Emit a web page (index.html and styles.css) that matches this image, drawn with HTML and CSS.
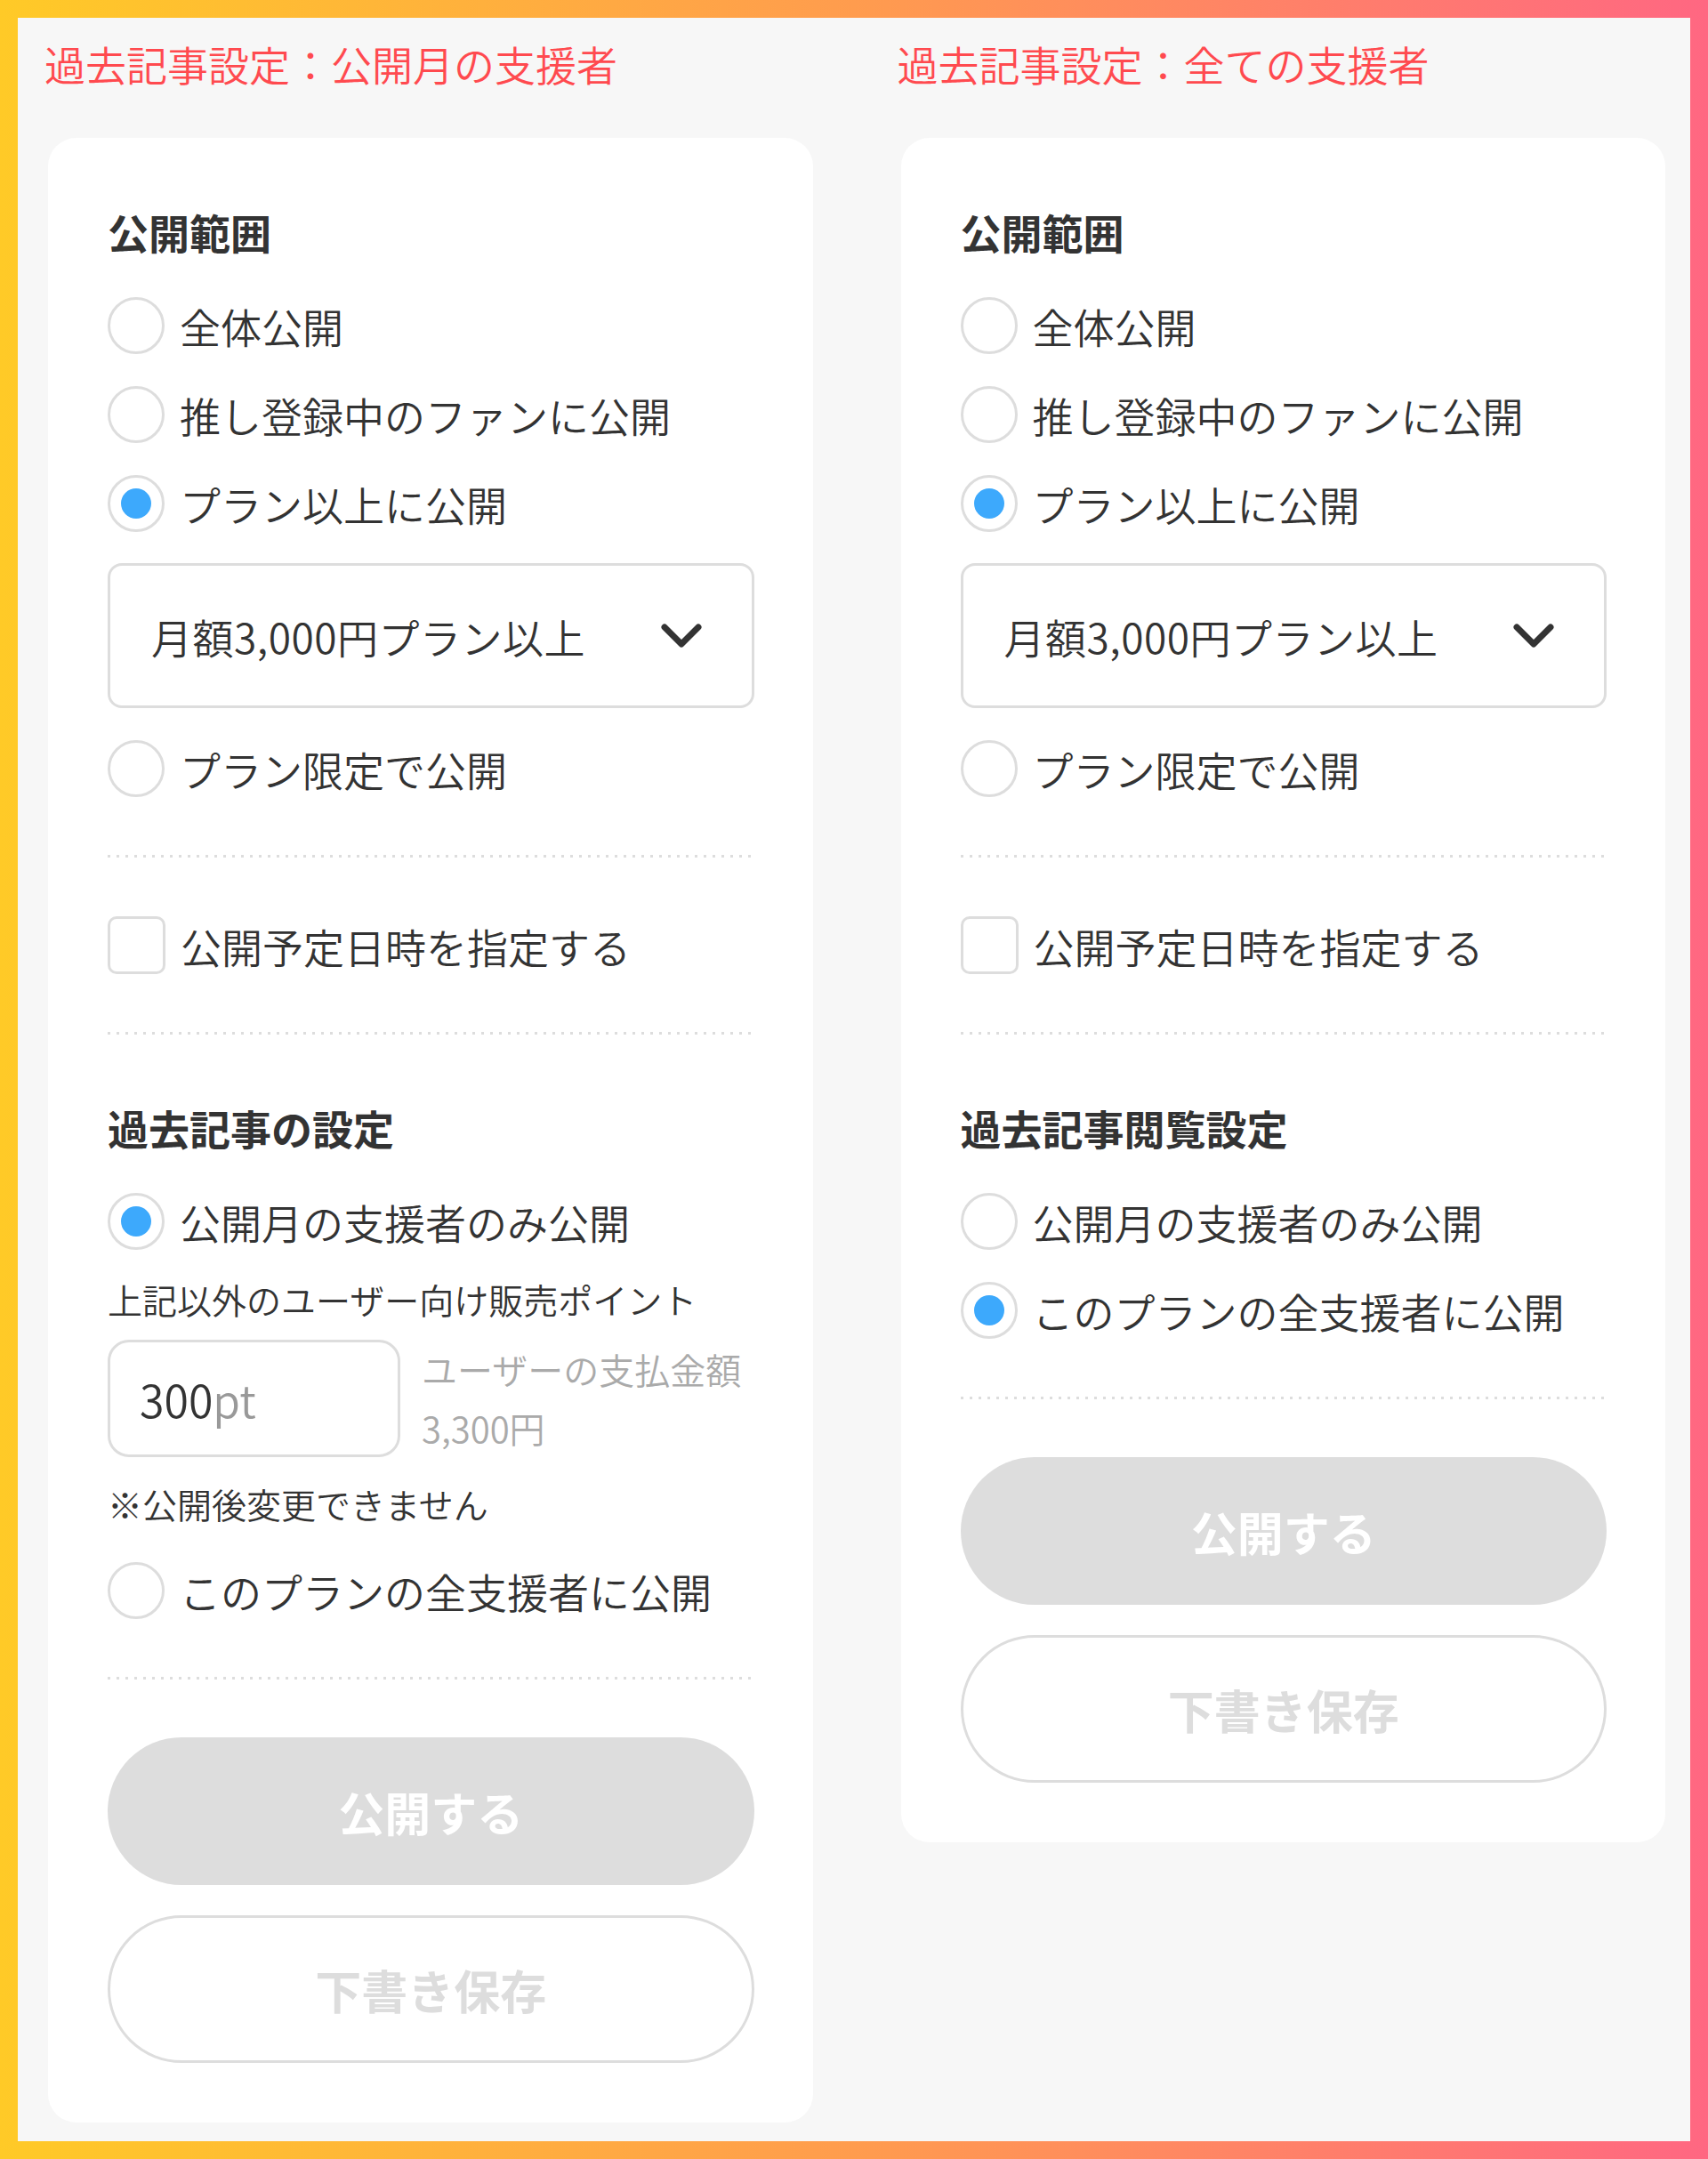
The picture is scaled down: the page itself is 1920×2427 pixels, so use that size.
FILE: index.html
```html
<!DOCTYPE html>
<html lang="ja">
<head>
<meta charset="utf-8">
<title>過去記事設定</title>
<link rel="stylesheet" href="styles.css">
</head>
<body>
<div class="frame">
  <main class="board">
    <section class="column">
      <h1 class="column-title">過去記事設定：公開月の支援者</h1>
      <div class="card">
        <h2 class="section-title">公開範囲</h2>
        <div class="radio-list">
          <div class="option"><span class="radio"></span><span class="option-text">全体公開</span></div>
          <div class="option"><span class="radio"></span><span class="option-text">推し登録中のファンに公開</span></div>
          <div class="option"><span class="radio is-checked"></span><span class="option-text">プラン以上に公開</span></div>
        </div>
        <div class="select">
          <span class="select-text">月額3,000円プラン以上</span>
          <svg class="chevron" width="46" height="28" viewBox="0 0 46 28"><polyline points="4,4 23,23 42,4" fill="none" stroke="#333" stroke-width="7" stroke-linecap="round" stroke-linejoin="round"/></svg>
        </div>
        <div class="radio-list after-select">
          <div class="option"><span class="radio"></span><span class="option-text">プラン限定で公開</span></div>
        </div>
        <div class="divider"></div>
        <div class="option check-option"><span class="checkbox"></span><span class="option-text">公開予定日時を指定する</span></div>
        <div class="divider"></div>
        <h2 class="section-title">過去記事の設定</h2>
        <div class="radio-list">
          <div class="option"><span class="radio is-checked"></span><span class="option-text">公開月の支援者のみ公開</span></div>
        </div>
        <p class="hint">上記以外のユーザー向け販売ポイント</p>
        <div class="price-row">
          <div class="price-input"><span class="price-value">300</span><span class="price-unit">pt</span></div>
          <div class="price-info"><span>ユーザーの支払金額</span><span>3,300円</span></div>
        </div>
        <p class="note">※公開後変更できません</p>
        <div class="radio-list after-note">
          <div class="option"><span class="radio"></span><span class="option-text">このプランの全支援者に公開</span></div>
        </div>
        <div class="divider"></div>
        <div class="actions">
          <button class="btn btn-primary" type="button">公開する</button>
          <button class="btn btn-outline" type="button">下書き保存</button>
        </div>
      </div>
    </section>

    <section class="column">
      <h1 class="column-title">過去記事設定：全ての支援者</h1>
      <div class="card">
        <h2 class="section-title">公開範囲</h2>
        <div class="radio-list">
          <div class="option"><span class="radio"></span><span class="option-text">全体公開</span></div>
          <div class="option"><span class="radio"></span><span class="option-text">推し登録中のファンに公開</span></div>
          <div class="option"><span class="radio is-checked"></span><span class="option-text">プラン以上に公開</span></div>
        </div>
        <div class="select">
          <span class="select-text">月額3,000円プラン以上</span>
          <svg class="chevron" width="46" height="28" viewBox="0 0 46 28"><polyline points="4,4 23,23 42,4" fill="none" stroke="#333" stroke-width="7" stroke-linecap="round" stroke-linejoin="round"/></svg>
        </div>
        <div class="radio-list after-select">
          <div class="option"><span class="radio"></span><span class="option-text">プラン限定で公開</span></div>
        </div>
        <div class="divider"></div>
        <div class="option check-option"><span class="checkbox"></span><span class="option-text">公開予定日時を指定する</span></div>
        <div class="divider"></div>
        <h2 class="section-title">過去記事閲覧設定</h2>
        <div class="radio-list">
          <div class="option"><span class="radio"></span><span class="option-text">公開月の支援者のみ公開</span></div>
          <div class="option"><span class="radio is-checked"></span><span class="option-text">このプランの全支援者に公開</span></div>
        </div>
        <div class="divider"></div>
        <div class="actions">
          <button class="btn btn-primary" type="button">公開する</button>
          <button class="btn btn-outline" type="button">下書き保存</button>
        </div>
      </div>
    </section>
  </main>
</div>
</body>
</html>
```

FILE: styles.css
```css
html, body {
  margin: 0;
  padding: 0;
}

body {
  font-family: "Noto Sans CJK JP", "Noto Sans", sans-serif;
  font-weight: 350;
  color: #333333;
}

.frame {
  box-sizing: border-box;
  width: 1920px;
  height: 2427px;
  padding: 20px;
  background: linear-gradient(90deg, #FFCA27 0%, #FF9C4E 50%, #FF6782 100%);
}

.board {
  box-sizing: border-box;
  height: 100%;
  background: #F7F7F7;
  display: grid;
  grid-template-columns: 1fr 1fr;
  column-gap: 99px;
  align-items: start;
  padding: 19px 28px 0 34px;
}

.column {
  min-width: 0;
}

.column-title {
  margin: 0 0 52px -4px;
  font-size: 46px;
  line-height: 64px;
  font-weight: 350;
  color: #FF4A4F;
}

.card {
  background: #FFFFFF;
  border-radius: 32px;
  padding: 72px 66px 67px 67px;
}

.section-title {
  margin: 0;
  font-size: 46px;
  line-height: 66px;
  font-weight: 700;
  color: #333333;
}

.radio-list {
  display: flex;
  flex-direction: column;
  gap: 36px;
  margin-top: 41px;
}

.radio-list.after-select {
  margin-top: 36px;
}

.radio-list.after-note {
  margin-top: 38px;
}

.option {
  display: flex;
  align-items: center;
  gap: 17px;
  height: 64px;
  font-size: 46px;
  line-height: 64px;
  color: #333333;
  white-space: nowrap;
}

.radio {
  box-sizing: border-box;
  flex: none;
  width: 64px;
  height: 64px;
  border: 3px solid #DDDDDD;
  border-radius: 50%;
  display: flex;
  align-items: center;
  justify-content: center;
}

.radio.is-checked::after {
  content: "";
  width: 34px;
  height: 34px;
  border-radius: 50%;
  background: #3DA9FC;
}

.check-option {
  height: 65px;
  margin-top: 66px;
}

.checkbox {
  box-sizing: border-box;
  flex: none;
  width: 65px;
  height: 65px;
  border: 3px solid #DDDDDD;
  border-radius: 10px;
}

.select {
  box-sizing: border-box;
  margin-top: 35px;
  height: 163px;
  border: 3px solid #DDDDDD;
  border-radius: 16px;
  display: flex;
  align-items: center;
  justify-content: space-between;
  padding: 0 56px 0 46px;
  font-size: 46px;
  color: #333333;
}

.select-text {
  letter-spacing: 0.5px;
}

.chevron {
  display: block;
  flex: none;
}

.divider {
  margin-top: 65px;
  height: 3px;
  background-image: linear-gradient(90deg, #DDDDDD 0 3px, transparent 3px 100%);
  background-size: 10px 3px;
  background-repeat: repeat-x;
}

.divider + .section-title {
  margin-top: 71px;
}

.hint {
  margin: 27px 0 0;
  font-size: 39px;
  line-height: 56px;
  color: #333333;
  white-space: nowrap;
}

.price-row {
  margin-top: 18px;
  display: flex;
  align-items: stretch;
  gap: 24px;
}

.price-input {
  box-sizing: border-box;
  width: 329px;
  height: 132px;
  border: 3px solid #DDDDDD;
  border-radius: 24px;
  padding-left: 33px;
  display: flex;
  align-items: center;
  font-size: 50px;
}

.price-value {
  color: #333333;
}

.price-unit {
  color: #999999;
}

.price-info {
  display: flex;
  flex-direction: column;
  font-size: 40px;
  line-height: 66px;
  color: #AAAAAA;
  white-space: nowrap;
}

.note {
  margin: 24px 0 0;
  font-size: 39px;
  line-height: 56px;
  color: #333333;
}

.actions {
  margin-top: 65px;
  display: flex;
  flex-direction: column;
  gap: 34px;
}

.btn {
  box-sizing: border-box;
  width: 100%;
  height: 166px;
  border-radius: 999px;
  font-family: "Noto Sans CJK JP", "Noto Sans", sans-serif;
  font-size: 52px;
  font-weight: 700;
  cursor: default;
}

.btn-primary {
  background: #DDDDDD;
  border: none;
  color: #FFFFFF;
}

.btn-outline {
  background: #FFFFFF;
  border: 3px solid #DDDDDD;
  color: #DDDDDD;
}
```
